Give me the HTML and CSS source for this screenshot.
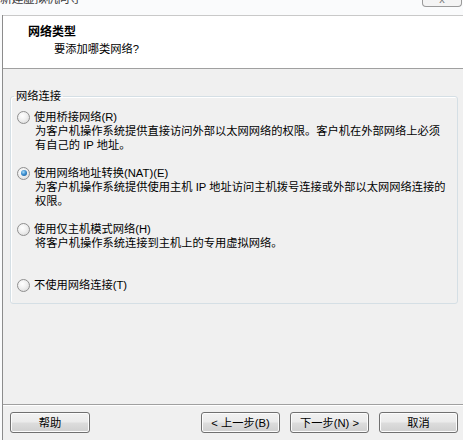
FILE: index.html
```html
<!DOCTYPE html>
<html lang="zh-CN">
<head>
    <meta charset="UTF-8">
    <title>新建虚拟机向导</title>
    <link rel="stylesheet" href="styles.css">
</head>
<body>
    <div class="titlebar">
        <span class="title-text">新建虚拟机向导</span>
        <span class="close-btn"><span class="close-glyph">x</span></span>
    </div>
    <div class="wizard">
        <div class="header">
            <div class="header-title">网络类型</div>
            <div class="header-sub">要添加哪类网络?</div>
        </div>

        <div class="content">
            <fieldset class="group">
                <legend>网络连接</legend>

                <div class="option">
                    <label class="option-label"><span class="radio"></span>使用桥接网络(R)</label>
                    <div class="option-desc">为客户机操作系统提供直接访问外部以太网网络的权限。客户机在外部网络上必须<br>有自己的 IP 地址。</div>
                </div>

                <div class="option">
                    <label class="option-label"><span class="radio checked"></span>使用网络地址转换(NAT)(E)</label>
                    <div class="option-desc">为客户机操作系统提供使用主机 IP 地址访问主机拨号连接或外部以太网网络连接的<br>权限。</div>
                </div>

                <div class="option">
                    <label class="option-label"><span class="radio"></span>使用仅主机模式网络(H)</label>
                    <div class="option-desc">将客户机操作系统连接到主机上的专用虚拟网络。</div>
                </div>

                <div class="option last">
                    <label class="option-label"><span class="radio"></span>不使用网络连接(T)</label>
                </div>
            </fieldset>
        </div>

        <div class="footer">
            <button class="btn">帮助</button>
            <div class="spacer"></div>
            <button class="btn">&lt; 上一步(B)</button>
            <button class="btn">下一步(N) &gt;</button>
            <button class="btn">取消</button>
        </div>
    </div>
</body>
</html>
```

FILE: styles.css
```css
html, body {
    margin: 0;
    padding: 0;
}

body {
    width: 463px;
    height: 440px;
    overflow: hidden;
    background: #fafbfc;
    font-family: "Liberation Sans", "Noto Sans CJK SC", sans-serif;
    font-size: 11.25px;
    line-height: 14px;
    color: #1a1a1a;
}

.titlebar {
    height: 15px;
    display: flex;
    justify-content: space-between;
    overflow: hidden;
}

.title-text {
    margin-top: -8px;
    font-size: 12px;
    color: #3c3c3c;
    letter-spacing: -0.5px;
}

.close-btn {
    width: 38px;
    height: 6px;
    margin-right: 1px;
    border: 1px solid #9a9a9a;
    border-top: none;
    border-radius: 0 0 4px 4px;
    background: #f4f4f4;
    text-align: center;
    overflow: hidden;
}

.close-glyph {
    display: block;
    margin-top: -8px;
    font-size: 11px;
    color: #777;
}

.wizard {
    margin-left: 2px;
    border-left: 1px solid #8c8c8c;
}

.header {
    height: 52px;
    background: #fff;
    border-top: 1px solid #c9c9c9;
    border-bottom: 1px solid #a0a0a0;
    box-sizing: content-box;
}

.header-title {
    padding: 9px 0 0 25px;
    font-size: 12px;
    font-weight: bold;
    color: #000;
}

.header-sub {
    margin-top: 3px;
    padding-left: 51px;
    color: #000;
}

.content {
    height: 335px;
    background: #f0f0f0;
    padding-top: 20px;
    box-sizing: border-box;
}

.group {
    margin: 0 5px 0 7px;
    padding: 7px 6px 11px 6px;
    border: 1px solid #d5dfe5;
    border-radius: 3px;
    box-shadow: inset 1px 1px 0 #fff;
}

.group legend {
    margin-left: -3px;
    padding: 0 2px;
    color: #000;
}

.option {
    height: 56px;
}

.option.last {
    height: 14px;
}

.option-label {
    display: flex;
    align-items: center;
    gap: 4px;
    color: #000;
}

.option-desc {
    margin-left: 18px;
    color: #000;
    white-space: nowrap;
}

.radio {
    width: 11px;
    height: 11px;
    border: 1px solid #8f8f8f;
    border-radius: 50%;
    background: radial-gradient(circle at 40% 35%, #ffffff 0%, #f0f0f0 45%, #d4d4d4 100%);
    display: flex;
    align-items: center;
    justify-content: center;
    flex-shrink: 0;
}

.radio.checked::after {
    content: "";
    width: 6px;
    height: 6px;
    border-radius: 50%;
    background: radial-gradient(circle at 40% 35%, #a8dcf8 0%, #3d8fd0 45%, #0a4f8e 100%);
}

.footer {
    height: 35px;
    background: #f0f0f0;
    border-top: 1px solid #a0a0a0;
    box-shadow: inset 0 1px 0 #fff;
    display: flex;
    align-items: flex-start;
    gap: 10px;
    padding: 7px 5px 0 7px;
}

.spacer {
    flex: 1;
}

.btn {
    width: 79px;
    height: 21px;
    padding: 0;
    border: 1px solid #707070;
    border-radius: 3px;
    background: linear-gradient(#f2f2f2 0%, #ebebeb 48%, #dddddd 52%, #cfcfcf 100%);
    box-shadow: inset 0 0 0 1px #fcfcfc;
    font-family: inherit;
    font-size: 11.25px;
    line-height: 14px;
    color: #000;
}

.btn:first-child {
    width: 80px;
}
```
